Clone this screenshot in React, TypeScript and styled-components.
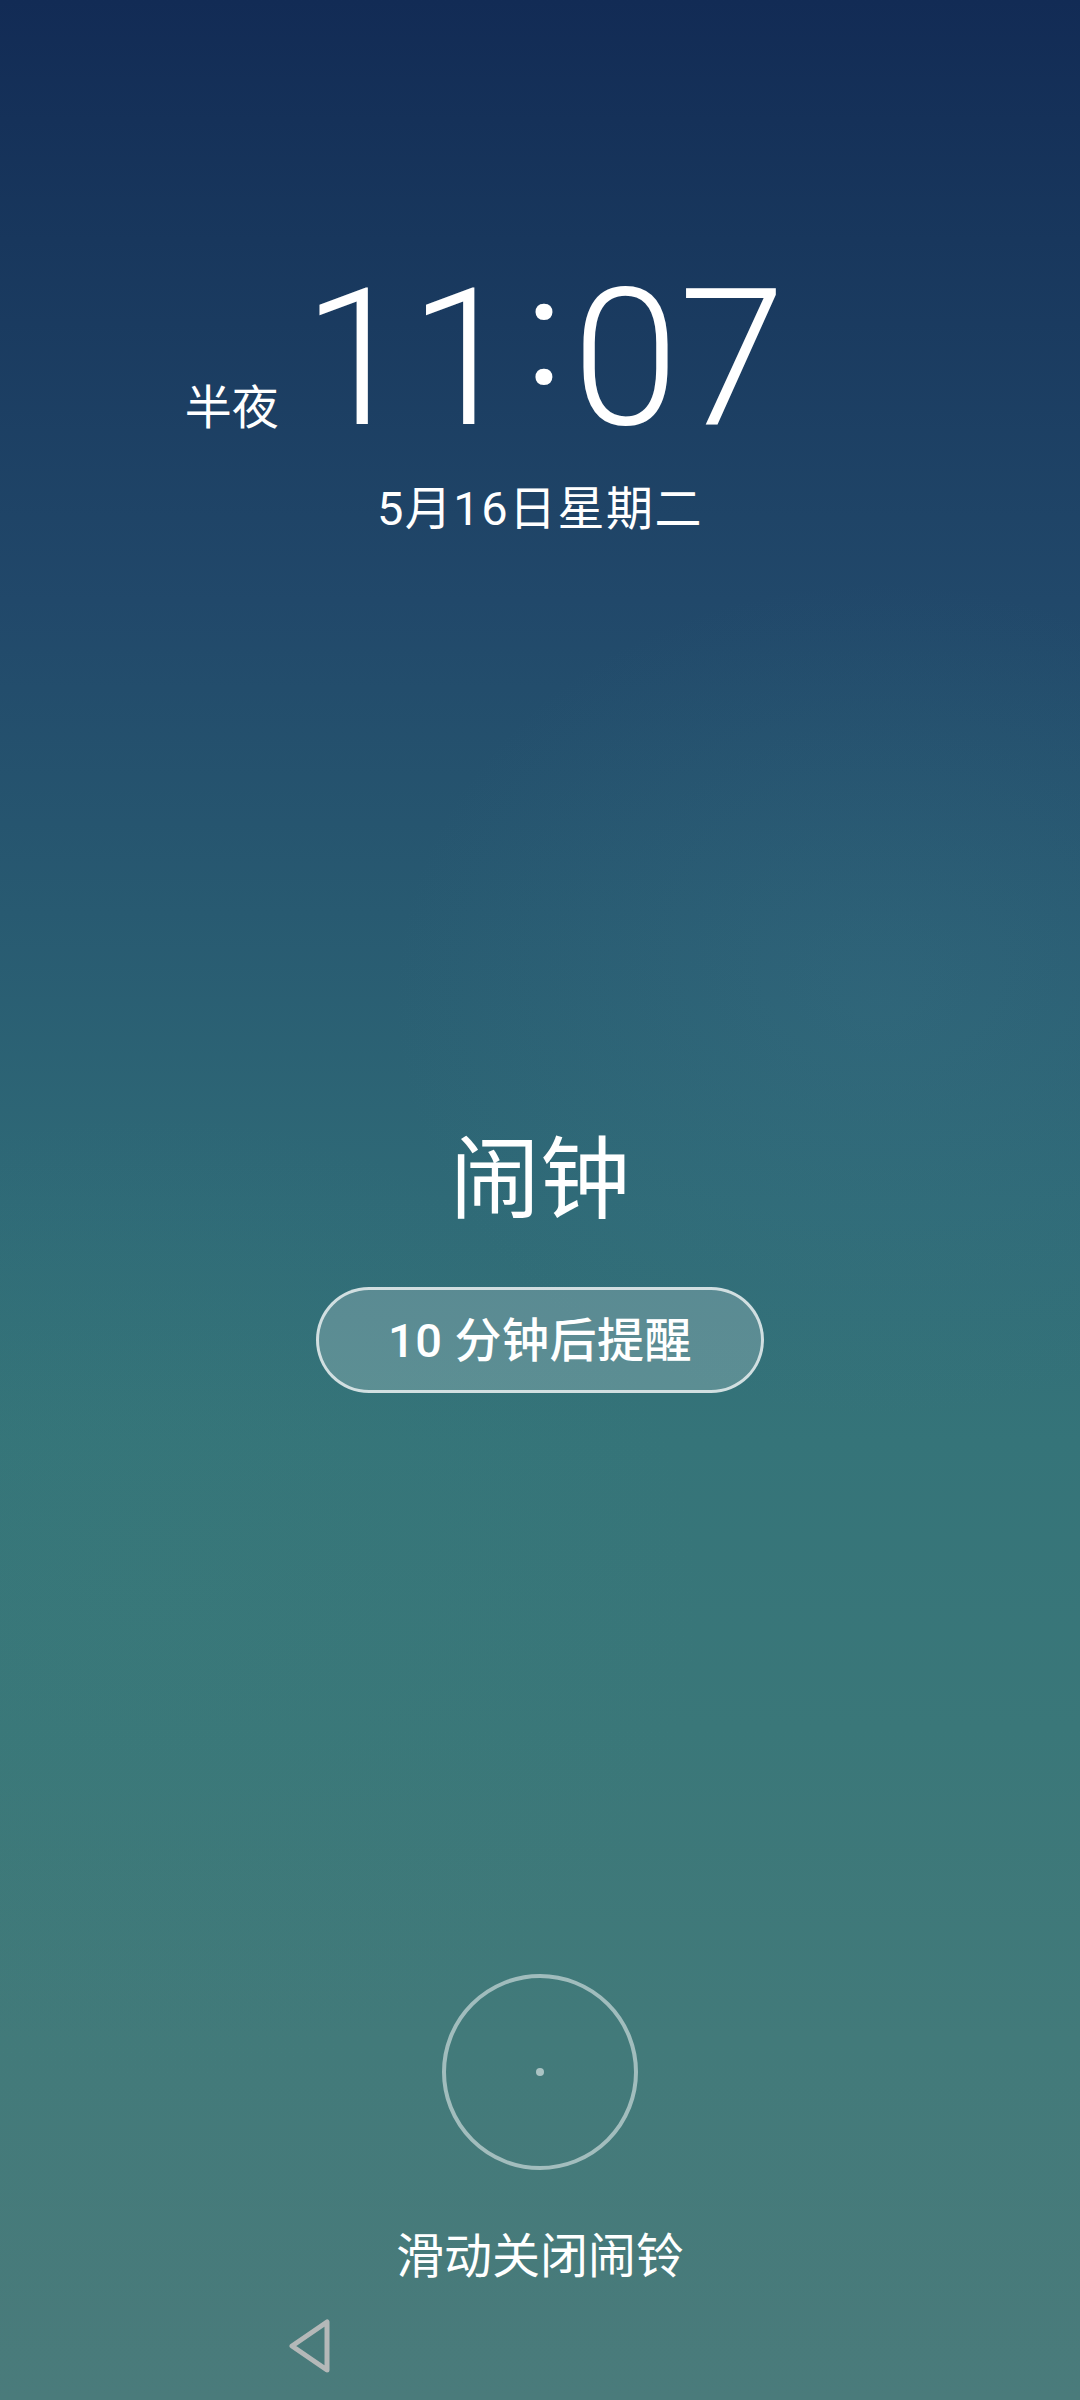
import React from "react";
import styled, { createGlobalStyle } from "styled-components";

const GlobalStyle = createGlobalStyle`
  html, body {
    margin: 0;
    padding: 0;
    background: #132d56;
  }
  * { box-sizing: border-box; }
`;

const Screen = styled.div`
  position: relative;
  width: 1080px;
  height: 2400px;
  overflow: hidden;
  display: flex;
  flex-direction: column;
  align-items: center;
  color: #ffffff;
  font-family: Roboto, "Noto Sans CJK SC", sans-serif;
  background:
    radial-gradient(ellipse 700px 600px at 880px 1000px, rgba(70, 130, 150, 0.18), rgba(70, 130, 150, 0) 70%),
    radial-gradient(ellipse 800px 700px at 150px 1600px, rgba(60, 130, 125, 0.15), rgba(60, 130, 125, 0) 70%),
    linear-gradient(
      180deg,
      #122b55 0%,
      #18375d 10%,
      #21486a 25%,
      #285a71 38%,
      #2f6a77 50%,
      #357479 60%,
      #3a7779 72%,
      #427a7a 85%,
      #4a7b7b 100%
    );
`;

const TimeRow = styled.div`
  margin-top: 263px;
  width: 100%;
  padding-left: 8px;
  display: grid;
  grid-template-columns: 1fr auto 1fr;
  align-items: baseline;
`;

const Period = styled.span`
  justify-self: end;
  margin-right: 24px;
  font-family: "Noto Sans CJK SC", sans-serif;
  font-size: 47px;
  line-height: 1;
`;

const Clock = styled.span`
  font-family: Roboto, sans-serif;
  font-weight: 300;
  font-size: 192px;
  line-height: 192px;
  letter-spacing: 0px;
  white-space: nowrap;
`;

const Colon = styled.span`
  display: inline-block;
  font-size: 150px;
  line-height: 0;
  letter-spacing: 0;
  margin: 0 10px 0 10px;
  vertical-align: 40px;
  font-weight: 400;
`;

const DateText = styled.div`
  margin-top: 31px;
  font-family: Roboto, "Noto Sans CJK SC", sans-serif;
  font-size: 47px;
  line-height: 46px;
  letter-spacing: 1.5px;
`;

const Title = styled.div`
  margin-top: 595px;
  font-family: "Noto Sans CJK SC", sans-serif;
  font-size: 90px;
  line-height: 90px;
`;

const SnoozeButton = styled.button`
  margin-top: 70px;
  width: 448px;
  height: 106px;
  border-radius: 53px;
  border: 3px solid rgba(255, 255, 255, 0.72);
  background: rgba(255, 255, 255, 0.2);
  color: #ffffff;
  font-family: Roboto, "Noto Sans CJK SC", sans-serif;
  font-weight: 500;
  font-size: 47px;
  line-height: 1;
  letter-spacing: 0.5px;
  display: flex;
  align-items: center;
  justify-content: center;
  padding: 0;
  cursor: pointer;
`;

const Slider = styled.div`
  margin-top: 581px;
  width: 196px;
  height: 196px;
  border-radius: 50%;
  border: 4px solid rgba(255, 255, 255, 0.5);
  display: flex;
  align-items: center;
  justify-content: center;
`;

const Dot = styled.div`
  width: 8px;
  height: 8px;
  border-radius: 50%;
  background: rgba(255, 255, 255, 0.55);
`;

const Hint = styled.div`
  margin-top: 58px;
  font-family: "Noto Sans CJK SC", sans-serif;
  font-size: 48px;
  line-height: 48px;
`;

const NavBar = styled.div`
  margin-top: 42px;
  width: 100%;
  padding-left: 284px;
  display: flex;
  align-items: center;
`;

const BackIcon = () => (
  <svg width="50" height="56" viewBox="0 0 50 56" fill="none">
    <path
      d="M43 4 L43 52 L8 28 Z"
      stroke="#b4b8b8"
      strokeWidth="5"
      strokeLinejoin="round"
    />
  </svg>
);

export default function App() {
  return (
    <>
      <GlobalStyle />
      <Screen>
        <TimeRow>
          <Period>半夜</Period>
          <Clock>
            11<Colon>:</Colon>07
          </Clock>
        </TimeRow>
        <DateText>5月16日星期二</DateText>
        <Title>闹钟</Title>
        <SnoozeButton>10 分钟后提醒</SnoozeButton>
        <Slider>
          <Dot />
        </Slider>
        <Hint>滑动关闭闹铃</Hint>
        <NavBar>
          <BackIcon />
        </NavBar>
      </Screen>
    </>
  );
}
